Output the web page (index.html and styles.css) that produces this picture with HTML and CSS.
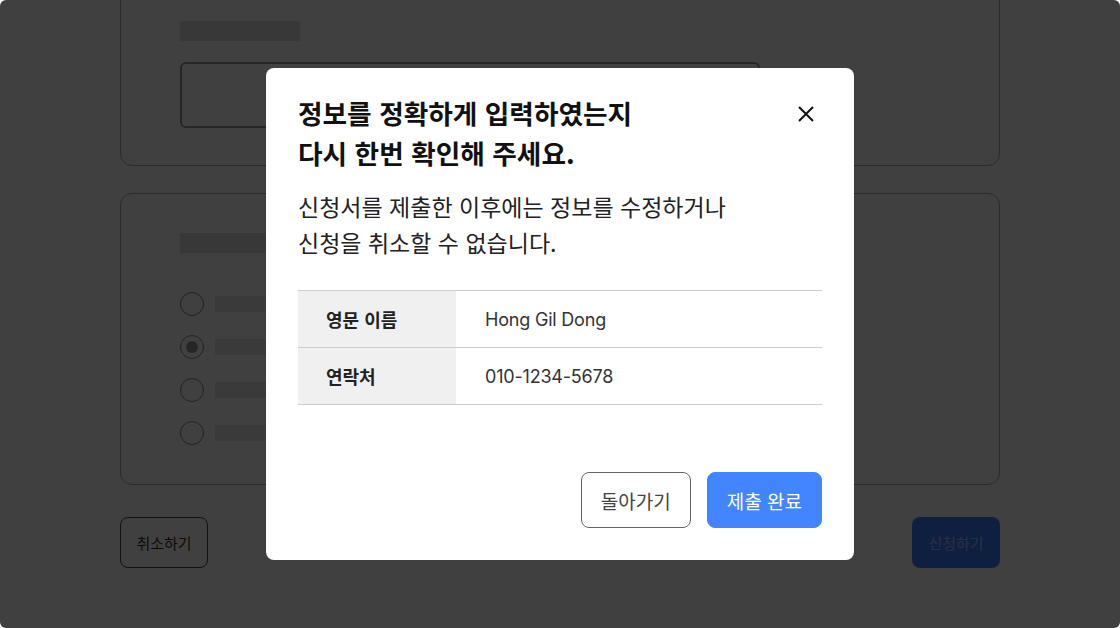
FILE: index.html
```html
<!DOCTYPE html>
<html lang="ko">
<head>
<meta charset="utf-8">
<title>신청서 확인</title>
<link rel="stylesheet" href="styles.css">
</head>
<body>
<div class="page">
  <section class="card card-top">
    <div class="skel skel-label"></div>
    <div class="input-box"></div>
  </section>
  <section class="card card-options">
    <div class="skel skel-label"></div>
    <ul class="options">
      <li class="option"><span class="radio"></span><span class="skel skel-text"></span></li>
      <li class="option"><span class="radio checked"></span><span class="skel skel-text"></span></li>
      <li class="option"><span class="radio"></span><span class="skel skel-text"></span></li>
      <li class="option"><span class="radio"></span><span class="skel skel-text"></span></li>
    </ul>
  </section>
  <div class="page-actions">
    <button class="btn-page btn-cancel">취소하기</button>
    <button class="btn-page btn-apply">신청하기</button>
  </div>
</div>

<div class="overlay">
  <div class="modal" role="dialog">
    <div class="modal-head">
      <h2 class="modal-title">정보를 정확하게 입력하였는지<br>다시 한번 확인해 주세요.</h2>
      <button class="close" aria-label="닫기">
        <svg width="18" height="18" viewBox="0 0 18 18"><path d="M2 2 L16 16 M16 2 L2 16" stroke="#111" stroke-width="2" fill="none"/></svg>
      </button>
    </div>
    <p class="modal-desc">신청서를 제출한 이후에는 정보를 수정하거나<br>신청을 취소할 수 없습니다.</p>
    <table class="info">
      <tr><th>영문 이름</th><td>Hong Gil Dong</td></tr>
      <tr><th>연락처</th><td>010-1234-5678</td></tr>
    </table>
    <div class="modal-actions">
      <button class="btn btn-back">돌아가기</button>
      <button class="btn btn-submit">제출 완료</button>
    </div>
  </div>
</div>
</body>
</html>
```

FILE: styles.css
```css
* { box-sizing: border-box; }
html, body { margin: 0; padding: 0; }
body {
  width: 1120px;
  height: 628px;
  overflow: hidden;
  background: #fff;
  font-family: "Inter", "Noto Sans CJK KR", sans-serif;
  position: relative;
}
.page {
  padding: 0 120px;
}
.card {
  border: 1px solid #aaa;
  border-radius: 12px;
  background: #fff;
}
.card-top {
  margin-top: -40px;
  padding: 60px 59px 37px;
}
.skel { background: #e0e0e0; display: block; }
.skel-label { width: 120px; height: 20px; }
.input-box {
  margin-top: 21px;
  width: 580px;
  height: 66px;
  border: 2px solid #999;
  border-radius: 6px;
}
.card-options {
  margin-top: 27px;
  padding: 39px 59px 39px;
}
.options {
  list-style: none;
  margin: 39px 0 0;
  padding: 0;
  display: flex;
  flex-direction: column;
  gap: 19px;
}
.option { display: flex; align-items: center; gap: 11px; }
.radio {
  width: 24px; height: 24px;
  border: 1.5px solid #888;
  border-radius: 50%;
  display: flex; align-items: center; justify-content: center;
}
.radio.checked::after {
  content: "";
  width: 12px; height: 12px;
  border-radius: 50%;
  background: #999;
}
.skel-text { width: 220px; height: 16px; background: #e6e6e6; }
.page-actions {
  margin-top: 32px;
  display: flex;
  justify-content: space-between;
}
.btn-page {
  width: 88px; height: 51px;
  border-radius: 8px;
  font-family: "Noto Sans CJK KR", sans-serif;
  font-size: 15px;
}
.btn-cancel { background: #fff; border: 1px solid #444; color: #333; }
.btn-apply { background: #3d7cff; border: none; color: rgba(255,255,255,0.55); }

.overlay {
  position: absolute;
  inset: 0;
  background: rgba(0,0,0,0.75);
  border-radius: 6px;
  display: flex;
  align-items: center;
  justify-content: center;
}
.modal {
  width: 588px;
  background: #fff;
  border-radius: 8px;
  padding: 25px 32px 32px;
}
.modal-head {
  display: flex;
  justify-content: space-between;
  align-items: flex-start;
}
.modal-title {
  margin: 0;
  font-family: "Noto Sans CJK KR", sans-serif;
  font-size: 26.7px;
  font-weight: 700;
  line-height: 40px;
  color: #111;
}
.close {
  width: 32px; height: 32px;
  margin-top: 5px;
  border: none; background: none; padding: 0;
  display: flex; align-items: center; justify-content: center;
}
.modal-desc {
  margin: 15px 0 0;
  font-family: "Noto Sans CJK KR", sans-serif;
  font-size: 23px;
  line-height: 36px;
  color: #222;
}
.info {
  margin-top: 30px;
  width: 100%;
  border-collapse: collapse;
  border-top: 1px solid #ccc;
}
.info tr { border-bottom: 1px solid #ccc; height: 57px; }
.info th {
  width: 158px;
  background: #f0f0f0;
  text-align: left;
  padding: 0 28px;
  font-family: "Noto Sans CJK KR", sans-serif;
  font-size: 18px;
  font-weight: 700;
  color: #222;
}
.info td {
  padding: 0 29px;
  font-size: 18px;
  color: #333;
  letter-spacing: -0.2px;
}
.modal-actions {
  margin-top: 67px;
  display: flex;
  justify-content: flex-end;
  gap: 16px;
}
.btn {
  height: 56px;
  padding: 0 19px;
  border-radius: 8px;
  font-family: "Noto Sans CJK KR", sans-serif;
  font-size: 19px;
}
.btn-back { background: #fff; border: 1px solid #666; color: #444; }
.btn-submit { background: #4285ff; border: 1px solid #4285ff; color: #fff; }
```
